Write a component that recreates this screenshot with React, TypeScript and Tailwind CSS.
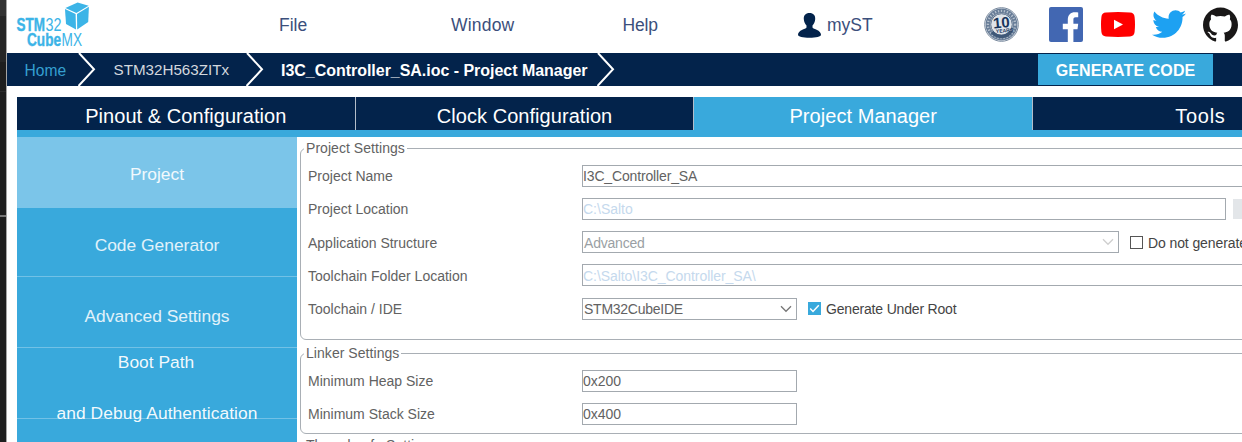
import type { ReactNode } from "react";
import { FaTwitter } from "react-icons/fa";
import { SiGithub } from "react-icons/si";

function Logo() {
  return (
    <svg width="80" height="50" viewBox="0 0 80 50" className="shrink-0" fontFamily="'Liberation Sans Narrow','Liberation Sans',sans-serif">
      <g fill="#3cb4e7">
        <path d="M67.600 2.400 78.600 5.700 66.400 13 55.400 8Z" />
        <path d="M55 9 65.600 13.900 66 29.400 56 24Z" />
        <path d="M67 13.900 78.900 6.800 78.200 22 67.200 29.400Z" />
        <g fontSize="18">
          <text x="6.500" y="31" fontWeight="700" stroke="#3cb4e7" strokeWidth=".4" textLength="28.500" lengthAdjust="spacingAndGlyphs">STM</text>
          <text x="35.500" y="31" textLength="16" lengthAdjust="spacingAndGlyphs">32</text>
          <text x="17" y="46.200" fontWeight="700" stroke="#3cb4e7" strokeWidth=".4" textLength="34" lengthAdjust="spacingAndGlyphs">Cube</text>
          <text x="51.500" y="46.200" textLength="20.500" lengthAdjust="spacingAndGlyphs">MX</text>
        </g>
      </g>
    </svg>
  );
}

function UserIcon() {
  return (
    <svg width="23" height="25" viewBox="0 0 23 25" className="shrink-0" fill="#03234b">
      <path d="M11.500 0C7.600 0 5.600 2.400 5.800 6c.1 2.800 1.300 5 2.700 6.500v2C7.600 16.300 0 17 0 21.800 0 23.800 5 24.800 11.500 24.800S23 23.800 23 21.800C23 17 15.400 16.300 14.500 14.500v-2C15.900 11 17.100 8.800 17.200 6 17.400 2.400 15.400 0 11.500 0Z" />
    </svg>
  );
}

function Badge() {
  return (
    <svg width="35" height="35" viewBox="0 0 35 35" className="shrink-0" fontFamily="'Liberation Sans',sans-serif">
      <circle cx="17.500" cy="17.500" r="16.800" fill="#f4f6f8" stroke="#75869b" strokeWidth="1" />
      <circle cx="17.500" cy="17.500" r="13.600" fill="none" stroke="#667b96" strokeWidth="4.600" />
      <circle cx="17.500" cy="17.500" r="13.600" fill="none" stroke="#b4bfcc" strokeWidth="2.400" strokeDasharray="1.300 1.700" />
      <circle cx="17.500" cy="17.500" r="10.800" fill="#dfe4ea" stroke="#576c87" strokeWidth="1" />
      <path d="M8 25A12 12 0 0 0 27 24.500" fill="none" stroke="#3f5878" strokeWidth="3.500" />
      <g transform="rotate(-5 17.500 17.500)">
        <text x="17.500" y="20.800" textAnchor="middle" fontSize="15" fontWeight="700" fill="#17345b">10</text>
        <text x="20" y="25.500" textAnchor="middle" fontSize="5" fontWeight="700" fill="#17345b">YEARS</text>
      </g>
    </svg>
  );
}

function Facebook() {
  return (
    <svg width="34" height="35" viewBox="0 0 34 35" className="shrink-0">
      <rect width="34" height="35" rx="2" fill="#4267b2" />
      <path d="M18.800 35V22.300H13.800V16.800H18.800V12.500C18.800 7.800 21.700 5.200 25.900 5.200c1.500 0 2.600.1 3.300.2v4.900h-2.500c-2 0-2.300 1.100-2.300 2.700v3.800h4.800l-.7 5.500h-4.100V35Z" fill="#fff" />
    </svg>
  );
}

function YouTube() {
  return (
    <svg width="34" height="25" viewBox="0 0 34 25" className="shrink-0">
      <path d="M5 .5Q17-.3 29 .5 33.200.7 33.600 5 34.400 12.500 33.600 20 33.200 24.200 29 24.500 17 25.300 5 24.500.8 24.200.4 20-.4 12.500.4 5 .8.7 5 .5Z" fill="#f00" />
      <path d="M13 7.700v9.600l9-4.800Z" fill="#fff" />
    </svg>
  );
}

function Chevron({ className }: { className: string }) {
  return (
    <svg width="12" height="8" viewBox="0 0 12 8" fill="none" stroke="currentColor" strokeWidth="1.300" className={className}>
      <path d="M1 1.200 6 6.300 11 1.200" />
    </svg>
  );
}

function CrumbArrow() {
  return (
    <svg width="18" height="33" viewBox="0 0 18 33" fill="none" stroke="#fff" strokeWidth="2" className="shrink-0">
      <path d="M1 0 16 16.300.5 33" />
    </svg>
  );
}

function Tab({ label, active, className }: { label: string; active?: boolean; className?: string }) {
  return (
    <div
      className={`flex h-[33px] w-[338.700px] shrink-0 items-center justify-center border-r border-[#b4bdc9] pt-[5px] text-xl text-white ${
        active ? "bg-[#39a9dc]" : "bg-[#03234b]"
      } ${className ?? "tracking-[0.050px]"}`}
    >
      {label}
    </div>
  );
}

function Row({ label, children }: { label: string; children: ReactNode }) {
  return (
    <div className="flex h-[33.200px] items-center">
      <div className="w-[281px] shrink-0 pt-px pl-[7px]">{label}</div>
      {children}
    </div>
  );
}

function Field({ value, className }: { value: string; className: string }) {
  return (
    <div className={`flex h-[22px] shrink-0 items-center border border-[#a3a9af] pt-px ${className}`}>{value}</div>
  );
}

function Group({ title, className, children }: { title: string; className: string; children?: ReactNode }) {
  return (
    <fieldset className={`ml-[3px] w-[1080px] shrink-0 rounded-[6px] border border-[#a9afb5] ${className}`}>
      <legend className="ml-[3px] h-5 pr-[2px] pl-[2px] leading-5 tracking-[0.050px]">{title}</legend>
      {children}
    </fieldset>
  );
}

export default function App() {
  return (
    <div className="flex h-[442px] w-[1242px] overflow-hidden bg-white font-['Liberation_Sans',Arial,sans-serif]">
      <aside className="flex w-[7px] shrink-0 flex-col border-r border-[#a5a5a5] bg-[#1e1e1e]">
        <div className="h-4 bg-[#333]" />
        <div className="h-[46px] bg-[#262626]" />
        <div className="h-[30px] border-b border-[#2c2c2c]" />
        <div className="mt-[123px] h-[2px] bg-[#777]" />
      </aside>
      <div className="flex min-w-0 flex-1 flex-col overflow-hidden">
        <header className="flex h-[53px] shrink-0 text-[17.500px] text-[#3b4f7c]">
          <div className="w-[83px] shrink-0 pl-[3px]">
            <Logo />
          </div>
          <nav className="flex flex-1 items-center pb-[3px]">
            <span className="ml-[189px] w-[172px]">File</span>
            <span className="w-[171.500px] tracking-[0.200px]">Window</span>
            <span className="w-[175.500px] tracking-[-0.200px]">Help</span>
            <span className="flex items-center gap-[6px]">
              <UserIcon />
              myST
            </span>
          </nav>
          <div className="flex h-[48px] shrink-0 items-center pr-1">
            <Badge />
            <span className="w-[30px]" />
            <Facebook />
            <span className="w-[18px]" />
            <YouTube />
            <span className="w-[17px]" />
            <FaTwitter size={34} color="#1da1f2" />
            <span className="w-[17px]" />
            <SiGithub size={35} color="#191717" />
          </div>
        </header>
        <div className="flex h-[33px] shrink-0 items-center bg-[#03234b] text-white">
          <span className="w-[71px] shrink-0 pt-[2px] pl-[17.500px] text-[15.600px] text-[#359fd0]">Home</span>
          <CrumbArrow />
          <span className="w-[149.500px] shrink-0 pt-[2px] pl-[17.500px] text-[15.200px] text-[#d3d8de]">STM32H563ZITx</span>
          <CrumbArrow />
          <span className="w-[333px] shrink-0 pt-[2px] pl-[17.500px] text-base font-bold tracking-[-0.030px] whitespace-nowrap">
            I3C_Controller_SA.ioc - Project Manager
          </span>
          <CrumbArrow />
          <span className="ml-auto flex h-[31px] w-[175px] items-center justify-center bg-[#39a9dc] pt-[2px] text-base font-bold tracking-[0.100px]">
            GENERATE CODE
          </span>
          <span className="w-[29px]" />
        </div>
        <div className="mt-[11px] ml-[10px] flex shrink-0 flex-col overflow-hidden">
          <div className="flex border-b-[7px] border-[#39a9dc]">
            <Tab label="Pinout & Configuration" />
            <Tab label="Clock Configuration" />
            <Tab label="Project Manager" active />
            <Tab label="Tools" className="pr-[3px] tracking-[0.700px]" />
          </div>
          <div className="flex h-[306px]">
            <nav className="flex w-[280px] shrink-0 flex-col bg-[#39a9dc] text-[17.400px] text-white/85">
              <div className="flex h-[71px] shrink-0 items-center justify-center bg-[#7bc5e9] pt-[4px] text-white/90">Project</div>
              <div className="flex h-[69px] shrink-0 items-center justify-center border-b border-[#72c1e6] pt-[6px]">Code Generator</div>
              <div className="flex h-[71px] shrink-0 items-center justify-center border-b border-[#72c1e6] pt-[8px]">Advanced Settings</div>
              <div className="flex h-[71px] shrink-0 flex-col border-b border-[#72c1e6] text-center leading-[51px] text-white/95">
                <span className="-mt-[11px] pr-[2px]">Boot Path</span>
                <span className="tracking-[0.080px]">and Debug Authentication</span>
              </div>
            </nav>
            <main className="flex flex-1 flex-col text-sm text-[#626262]">
              <Group title="Project Settings" className="mt-[1px] h-[202px]">
                <div className="h-[1.200px]" />
                <Row label="Project Name">
                  <Field value="I3C_Controller_SA" className="w-[800px] tracking-[-0.150px]" />
                </Row>
                <Row label="Project Location">
                  <Field value="C:\Salto" className="w-[644px] text-[#c5d9ed]" />
                  <div className="ml-[7px] h-5 w-[60px] bg-[#e3e6e9]" />
                </Row>
                <Row label="Application Structure">
                  <Field value="Advanced" className="w-[537px] pl-px tracking-[-0.200px] text-[#9a9fa4]" />
                  <Chevron className="-ml-[17px] shrink-0 text-[#cfcfcf]" />
                  <span className="ml-4 h-[13px] w-[13px] shrink-0 border border-[#555]" />
                  <span className="ml-[5px] shrink-0 pt-px tracking-[-0.100px] whitespace-nowrap text-[#444]">Do not generate the main()</span>
                </Row>
                <Row label="Toolchain Folder Location">
                  <Field value="C:\Salto\I3C_Controller_SA\" className="w-[800px] tracking-[-0.060px] text-[#c5d9ed]" />
                </Row>
                <Row label="Toolchain / IDE">
                  <Field value="STM32CubeIDE" className="w-[215px] pl-px tracking-[-0.250px]" />
                  <Chevron className="-ml-[17px] shrink-0 text-[#777]" />
                  <span className="ml-4 flex h-[13px] w-[13px] shrink-0 items-center justify-center bg-[#39a9dc]">
                    <svg width="11" height="9" viewBox="0 0 11 9" fill="none" stroke="#fff" strokeWidth="1.500">
                      <path d="M1.200 4.500 4 7.400 9.800 1.200" />
                    </svg>
                  </span>
                  <span className="ml-[5px] pt-px tracking-[-0.180px] text-[#444]">Generate Under Root</span>
                </Row>
              </Group>
              <Group title="Linker Settings" className="mt-[3px] h-[91px]">
                <div className="h-px" />
                <Row label="Minimum Heap Size">
                  <Field value="0x200" className="w-[215px]" />
                </Row>
                <Row label="Minimum Stack Size">
                  <Field value="0x400" className="w-[215px]" />
                </Row>
              </Group>
              <Group title="Thread-safe Settings" className="mt-[1px] h-[80px]" />
            </main>
          </div>
        </div>
      </div>
    </div>
  );
}
